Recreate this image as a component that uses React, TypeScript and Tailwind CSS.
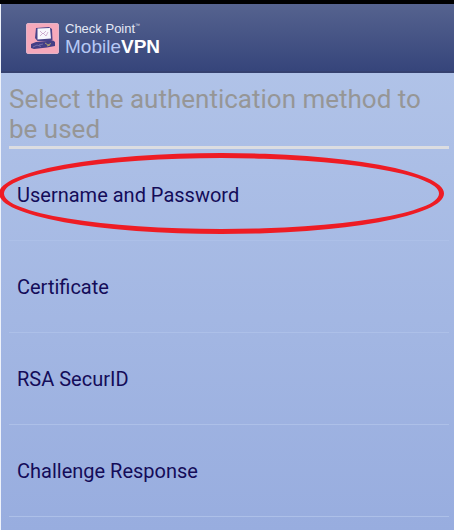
const methods = [
  { name: "Username and Password", highlighted: true },
  { name: "Certificate" },
  { name: "RSA SecurID" },
  { name: "Challenge Response" },
];

export default function App() {
  return (
    <div className="min-h-screen border-l border-[#eef2fa] bg-linear-to-b from-[#b4c6e9] to-[#98addf] font-['Roboto','Noto_Sans',sans-serif]">
      <Header />
      <main className="pl-2 pr-[5px] pt-[11px]">
        <h1 className="border-b-[3px] border-[#dcdde1] pb-0.5 text-[26px] leading-[30px] text-[#969696]">
          Select the authentication method to be used
        </h1>
        <ul>
          {methods.map((m) => (
            <MethodRow key={m.name} name={m.name} highlighted={m.highlighted} />
          ))}
        </ul>
      </main>
    </div>
  );
}

function Header() {
  return (
    <header className="-ml-px border-t-4 border-black">
      <div className="ml-px flex h-[69px] items-center gap-[6px] border-b-2 border-[#35416f] bg-linear-to-b from-[#56638f] to-[#36457b] px-[25px] pt-0.5">
        <Logo />
        <div className="font-['Liberation_Sans',Arial,sans-serif]">
          <p className="flex text-[13px] leading-[15px] text-[#e4e9f6]">
            Check Point<span className="text-[5px] leading-[8px]">™</span>
          </p>
          <p className="text-[19px] leading-[21px] text-[#b5c8f4]">
            Mobile<b className="text-white">VPN</b>
          </p>
        </div>
      </div>
    </header>
  );
}

function MethodRow({ name, highlighted }: { name: string; highlighted?: boolean }) {
  return (
    <li className="relative border-b border-[#adc0e8]">
      <button type="button" className="flex h-[91px] w-full items-center px-2 text-left text-[20px] text-[#140c59]">
        {name}
      </button>
      {highlighted && (
        <span className="pointer-events-none absolute -left-[10px] right-[5px] top-1 bottom-1.5 rounded-[50%] border-[5px] border-[#ee1c24]" />
      )}
    </li>
  );
}

function Logo() {
  return (
    <svg width="33" height="31" viewBox="0 0 33 31" fill="none" aria-hidden="true">
      <rect x="0.5" y="0.5" width="32" height="30" rx="1.5" fill="#f6a9bb" stroke="#e3b3c8" />
      <path d="M10 5 23 4l3 2 .5 11-2 1.500-13-.5L9 15z" fill="#494389" />
      <path d="M11.500 5.500 24 5l1 10.500-13.500 1z" fill="#f7f6fc" />
      <path d="M14 8l3 3 3-3M14 13l3-3 3 3 2-4" stroke="#c6a0c6" strokeWidth="0.8" />
      <path d="M5 21l5-2 17-1.500 2 1.500v4l-8 1.500-13 1.500-3-1z" fill="#443f86" />
      <path d="M7 24l4-2 4 1.500M13 22l4-1" stroke="#8b83b8" strokeWidth="0.7" />
      <path d="M19 20l3 2 3-1.500M21 23l3-1" stroke="#c5b66c" strokeWidth="0.8" />
    </svg>
  );
}
